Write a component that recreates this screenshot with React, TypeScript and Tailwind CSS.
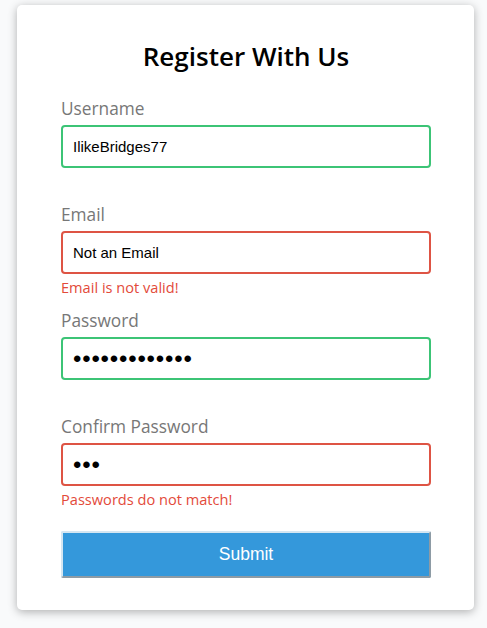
import React from "react";

type FieldProps = {
    label: string;
    type?: string;
    value: string;
    ok: boolean;
    error?: string;
};

function Field({ label, type = "text", value, ok, error }: FieldProps): React.JSX.Element {
    const isPwd = type === "password";
    return (
        <div className="mb-[10px]">
            <label className="block text-[17.3px] leading-[28px] text-[#777] mb-[2px]">{label}</label>
            <input
                type={type}
                value={value}
                readOnly
                className={
                    "block w-full h-[43px] border-2 rounded-[4px] px-[10px] text-black outline-none bg-white " +
                    (ok ? "border-[#3cc476] " : "border-[#de5444] ") +
                    (isPwd
                        ? "text-[24px] tracking-[0.8px] font-['Liberation_Sans',Arial,sans-serif]"
                        : "text-[15px] font-['Liberation_Sans',Arial,sans-serif]")
                }
            />
            <div className="h-[23px] pt-[3px] text-[14.6px] leading-[20px] text-[#e34a3a]">{error}</div>
        </div>
    );
}

export default function App(): React.JSX.Element {
    return (
        <div className="min-h-[628px] bg-[#f9fafb] pt-[5px] pl-[17px] font-['Open_Sans',sans-serif]">
            <div className="w-[457px] bg-white rounded-[5px] shadow-[0_2px_10px_rgba(0,0,0,0.3)] pt-[35px] pb-[32px] pl-[44px] pr-[43px]">
                <h2 className="text-center text-[26px] leading-[32px] font-semibold text-black mb-[23px]">
                    Register With Us
                </h2>
                <form onSubmit={(e) => e.preventDefault()}>
                    <Field label="Username" value="IlikeBridges77" ok />
                    <Field label="Email" value="Not an Email" ok={false} error="Email is not valid!" />
                    <Field label="Password" type="password" value="abcdefghijklm" ok />
                    <Field
                        label="Confirm Password"
                        type="password"
                        value="abc"
                        ok={false}
                        error="Passwords do not match!"
                    />
                    <button
                        type="submit"
                        className="block w-full h-[47px] mt-[22px] bg-[#3498db] text-white text-[17.5px] font-['Liberation_Sans',Arial,sans-serif] border-2 border-t-[#d4e6f2] border-l-[#d4e6f2] border-r-[#8d9ba5] border-b-[#8d9ba5] rounded-[2px]"
                    >
                        Submit
                    </button>
                </form>
            </div>
        </div>
    );
}
